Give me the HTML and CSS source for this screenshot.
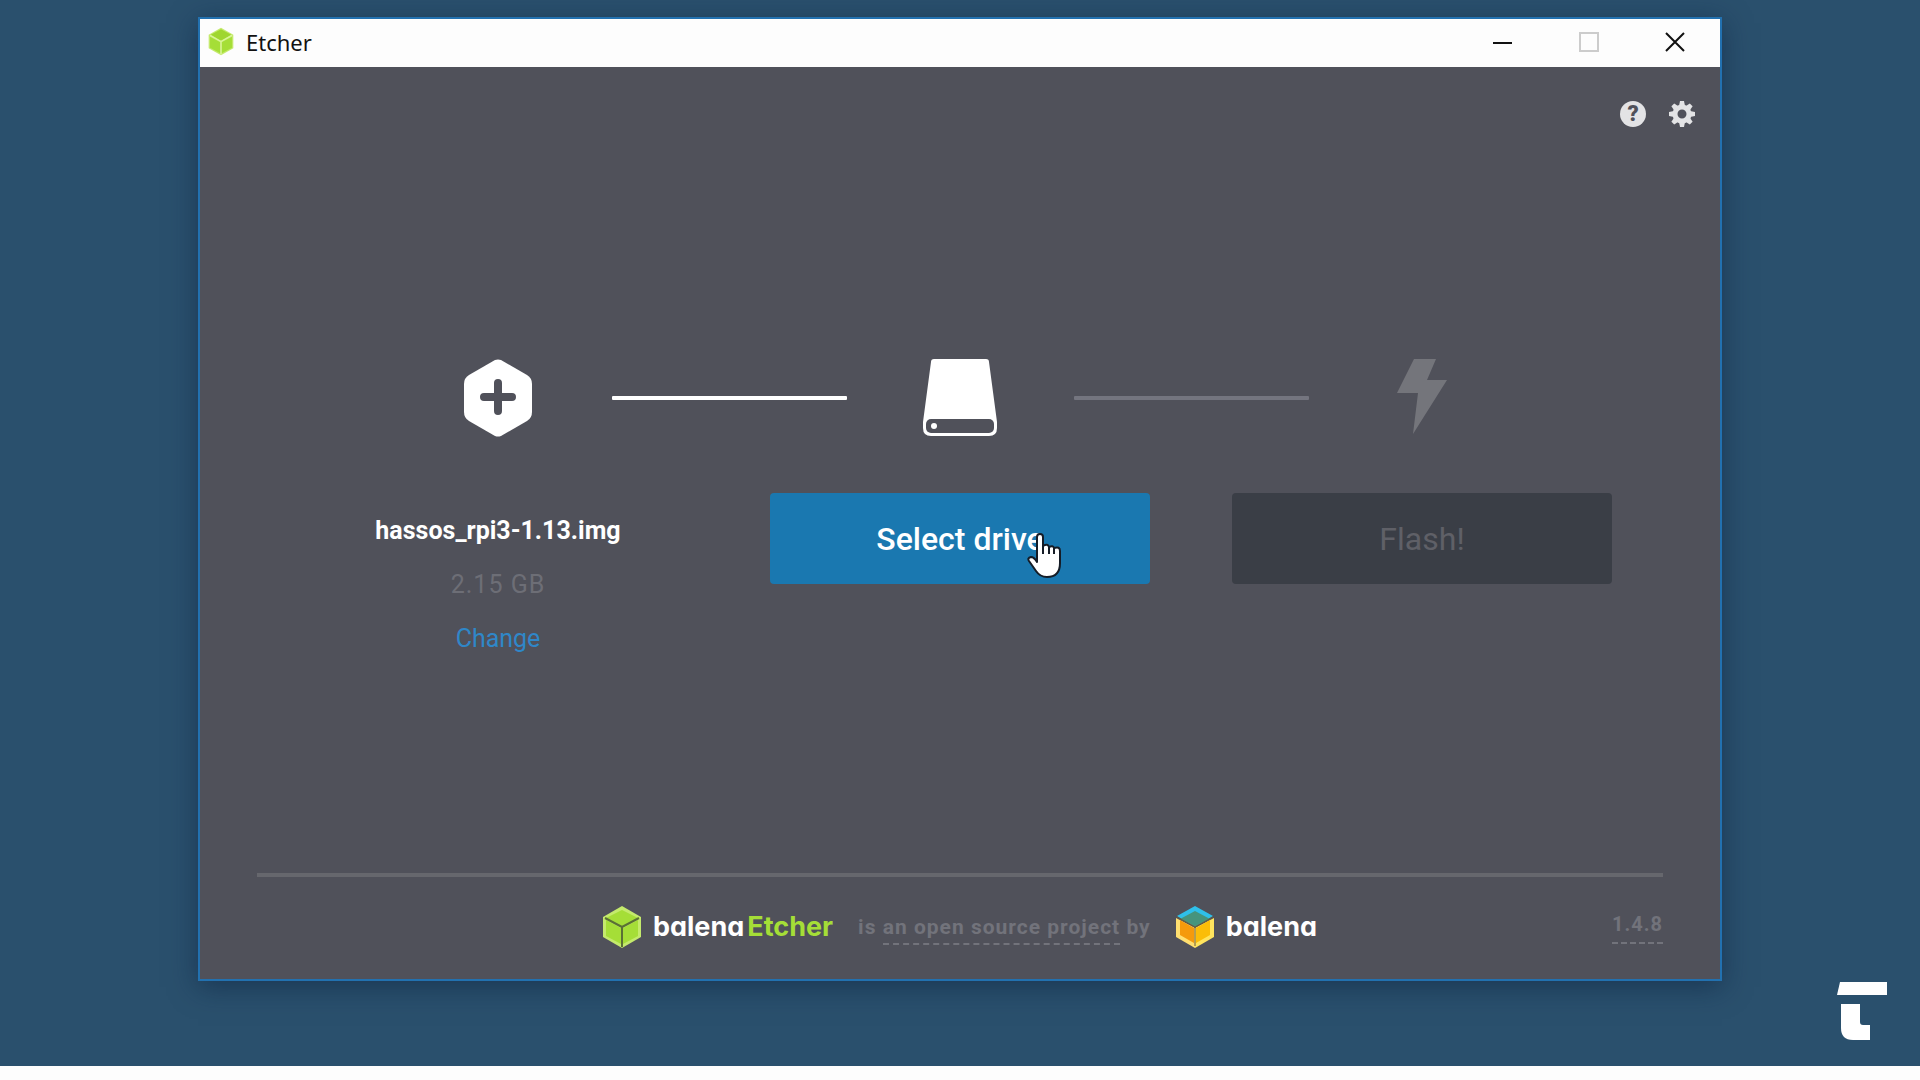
FILE: index.html
```
<!DOCTYPE html>
<html lang="en">
<head>
  <meta charset="UTF-8" />
  <meta name="viewport" content="width=device-width, initial-scale=1" />
  <title>Etcher</title>
  <link rel="stylesheet" href="styles.css">
</head>
<body>

<div class="desktop">
  <div class="window">

    <header class="titlebar">
      <svg class="app-icon" viewBox="0 0 38 42">
        <polygon points="19,1 37,11 37,31 19,41 1,31 1,11" fill="#c4ea6c" />
        <polygon points="19,3 34,11 19,20 4,11" fill="#9fd62f" />
        <polygon points="3,14 18,22 18,38 3,30" fill="#a5de37" />
        <polygon points="35,14 20,22 20,38 35,30" fill="#a5de37" />
        <path d="M3 12 L19 21 L35 12 M19 21 V40" fill="none" stroke="#d9f59a" stroke-width="2" />
      </svg>
      <span class="title">Etcher</span>
      <div class="window-controls">
        <button type="button" aria-label="Minimize">
          <svg width="20" height="20" viewBox="0 0 20 20"><path d="M0 11 H19" stroke="#111" stroke-width="2" /></svg>
        </button>
        <button type="button" aria-label="Maximize" disabled>
          <svg width="20" height="20" viewBox="0 0 20 20"><rect x="1" y="1" width="18" height="18" fill="none" stroke="#ccc" stroke-width="2" /></svg>
        </button>
        <button type="button" aria-label="Close">
          <svg width="20" height="20" viewBox="0 0 20 20"><path d="M1 1 L19 19 M19 1 L1 19" stroke="#111" stroke-width="2" /></svg>
        </button>
      </div>
    </header>

    <nav class="tools">
      <button type="button" class="help-btn" aria-label="Help">?</button>
      <button type="button" class="settings-btn" aria-label="Settings">
        <svg width="26" height="26" viewBox="-13 -13 26 26">
          <g fill="#e3e3e5">
            <path id="tooth" d="M-3 -8 L-2 -13 H2 L3 -8 Z" />
            <use href="#tooth" transform="rotate(45)" />
            <use href="#tooth" transform="rotate(90)" />
            <use href="#tooth" transform="rotate(135)" />
            <use href="#tooth" transform="rotate(180)" />
            <use href="#tooth" transform="rotate(225)" />
            <use href="#tooth" transform="rotate(270)" />
            <use href="#tooth" transform="rotate(315)" />
          </g>
          <circle r="7" fill="none" stroke="#e3e3e5" stroke-width="5" />
        </svg>
      </button>
    </nav>

    <main>
      <div class="progress">
        <svg class="step-icon" viewBox="0 0 76 78">
          <path d="M35 1 Q38 0 41 1 L67 16 Q72 19 72 25 V53 Q72 59 67 62 L41 77 Q38 78 35 77 L9 62 Q4 59 4 53 V25 Q4 19 9 16 Z" fill="#fff" />
          <path d="M38 24 V52 M24 38 H52" stroke="#50515a" stroke-width="8" stroke-linecap="round" />
        </svg>
        <span class="line"></span>
        <svg class="step-icon" viewBox="0 0 76 78">
          <path d="M12 0 H64 Q67 0 67 3 L75 63 V69 Q75 77 67 77 H9 Q1 77 1 69 V63 L9 3 Q9 0 12 0 Z" fill="#fff" />
          <rect x="4" y="60" width="68" height="14" rx="5" fill="#50515a" />
          <circle cx="12" cy="67" r="3" fill="#fff" />
        </svg>
        <span class="line line-off"></span>
        <svg class="step-icon" viewBox="0 0 76 78">
          <polygon points="30,0 52,0 43,21 63,21 29,75 34,34 13,34" fill="#74757b" />
        </svg>
      </div>

      <div class="steps">
        <div class="image-info">
          <strong class="image-name">hassos_rpi3-1.13.img</strong>
          <span class="image-size">2.15 GB</span>
          <a href="#" class="change">Change</a>
        </div>
        <div class="step">
          <button type="button" class="btn">Select drive</button>
          <!-- mouse pointer -->
          <svg class="cursor" viewBox="0 0 34 46">
            <path d="M10 26 V4 Q10 1 13 1 Q16 1 16 4 V13 Q21 10 22 14 Q26 12 27 15 Q33 13 33 18 V30 Q33 44 20 44 Q13 44 9 38 L2 28 Q0 25 4 24 Q7 24 10 29 Z" fill="#fff" stroke="#151c26" stroke-width="2" stroke-linejoin="round" />
            <path d="M16 12 V21 M22 14 V21 M27 15 V21" stroke="#151c26" stroke-width="2" />
          </svg>
        </div>
        <div class="step">
          <button type="button" class="btn" disabled>Flash!</button>
        </div>
      </div>
    </main>

    <footer>
      <div class="credits">
        <a href="#" class="brand">
          <svg class="cube" viewBox="0 0 38 42">
            <polygon points="19,0 38,11 38,31 19,42 0,31 0,11" fill="#c4ea6c" />
            <polygon points="19,4 35,12 19,21 3,12" fill="#a5de37" />
            <polygon points="3,14 18,22 18,38 3,30" fill="#a5de37" />
            <polygon points="35,14 20,22 20,38 35,30" fill="#a5de37" />
            <path d="M2 12 L19 21 L36 12 M19 21 V41" fill="none" stroke="#5a7035" stroke-width="2" />
          </svg>
          <span class="brand-name">balena<span class="green">Etcher</span></span>
        </a>
        <span class="note">is <a href="#" class="dashed">an open source project</a> by</span>
        <a href="#" class="brand">
          <svg class="cube" viewBox="0 0 38 42">
            <polygon points="19,0 37,10 19,21 1,10" fill="#2fc0ea" />
            <polygon points="19,5 34,13 19,21 4,13" fill="#46947d" />
            <polygon points="0,12 19,22 19,42 0,31" fill="#ffdf70" />
            <polygon points="38,12 19,22 19,42 38,31" fill="#ffe45e" />
            <polygon points="4,14 18,22 18,37 4,29" fill="#f59a0c" />
            <polygon points="34,14 20,22 20,37 34,29" fill="#fbbd08" />
            <path d="M1 11 L19 21 L37 11 M19 21 V40" fill="none" stroke="#6b5a3a" stroke-width="1" />
          </svg>
          <span class="brand-name">balena</span>
        </a>
      </div>
      <a href="#" class="dashed version">1.4.8</a>
    </footer>

  </div>

  <svg class="watermark" viewBox="0 0 50 58">
    <polygon points="3,0 50,0 50,13 0,13" fill="#fff" />
    <path d="M4 22 H23 V40 Q23 43 26 43 H33 V58 H16 Q4 58 4 46 Z" fill="#fff" />
  </svg>
</div>

</body>
</html>
```
FILE: styles.css
```
* {
  box-sizing: border-box;
}

body {
  margin: 0;
  min-height: 100vh;
  display: flex;
  flex-direction: column;
  padding-bottom: 14px;
  background-color: #fdfdfd;
  font-family: Roboto, "Liberation Sans", sans-serif;
}

button {
  padding: 0;
  border: none;
  background: none;
  font-family: inherit;
}

a {
  text-decoration: none;
}

svg {
  display: block;
}

.desktop {
  position: relative;
  flex: 1;
  display: flex;
  padding: 17px 198px 85px;
  background-color: #2a506d;
}

/* App window */
.window {
  flex: 1;
  display: flex;
  flex-direction: column;
  border: 2px solid #2271b0;
  background-color: #50515a;
  box-shadow: 0 6px 26px rgba(10, 30, 60, 0.5);
}

.titlebar {
  display: flex;
  align-items: center;
  height: 48px;
  padding: 0 2px 3px 8px;
  background-color: #fdfdfd;
}

.app-icon {
  width: 26px;
  height: 29px;
}

.title {
  margin-left: 12px;
  color: #111;
  font-family: "Noto Sans", "Open Sans", sans-serif;
  font-size: 22px;
  line-height: 30px;
}

.window-controls {
  display: flex;
  margin-left: auto;
}

.window-controls button {
  display: flex;
  align-items: center;
  justify-content: center;
  width: 86px;
  height: 45px;
}

.tools {
  display: flex;
  justify-content: flex-end;
  gap: 23px;
  padding: 34px 25px 0;
}

.help-btn {
  width: 26px;
  height: 26px;
  border-radius: 50%;
  background-color: #e3e3e5;
  color: #50515a;
  font-size: 22px;
  font-weight: 900;
  line-height: 26px;
}

/* Steps */
main {
  flex: 1;
  padding-top: 232px;
}

.progress {
  display: flex;
  align-items: center;
  justify-content: space-between;
  padding: 0 260px;
}

.step-icon {
  width: 76px;
  height: 78px;
}

.line {
  width: 235px;
  height: 4px;
  border-radius: 1px;
  background-color: #fff;
}

.line-off {
  background-color: #74757f;
}

.steps {
  display: grid;
  grid-template-columns: repeat(3, 1fr);
  gap: 82px;
  padding: 56px 108px 0;
}

.step {
  position: relative;
}

.btn {
  width: 100%;
  height: 91px;
  border-radius: 4px;
  background-color: #1a78b0;
  color: #fff;
  font-size: 32px;
  font-weight: 500;
}

.btn:disabled {
  background-color: #3a3e46;
  color: #5f6067;
  font-weight: 400;
}

.cursor {
  position: absolute;
  top: 40px;
  left: 257px;
  width: 34px;
  height: 46px;
}

.image-info {
  display: flex;
  flex-direction: column;
  align-items: center;
  gap: 22px;
  padding-top: 22px;
  font-size: 25px;
  line-height: 32px;
}

.image-name {
  color: #fff;
}

.image-size {
  color: #6d6e76;
  letter-spacing: 1px;
}

.change {
  color: #2f87c8;
}

/* Footer */
footer {
  position: relative;
  display: flex;
  align-items: center;
  justify-content: center;
  height: 106px;
  margin: 0 57px;
  padding-bottom: 3px;
  border-top: 4px solid #66676d;
}

.credits {
  display: flex;
  align-items: center;
  gap: 25px;
}

.brand {
  display: flex;
  align-items: center;
  gap: 12px;
}

.cube {
  width: 38px;
  height: 42px;
}

/* cv11 is the round, single-storey a */
.brand-name {
  color: #fff;
  font-family: Inter, Lato, sans-serif;
  font-feature-settings: "cv11";
  font-size: 27px;
  font-weight: 700;
  line-height: 36px;
}

.green {
  margin-left: 3px;
  color: #a5de37;
}

.note,
.version {
  color: #72737b;
  font-size: 20px;
  font-weight: 700;
  line-height: 28px;
  letter-spacing: 1px;
}

.note {
  font-size: 21px;
}

.dashed {
  padding-bottom: 4px;
  border-bottom: 2px dashed #72737b;
  color: inherit;
}

.version {
  position: absolute;
  right: 0;
  color: #72737b;
}

.watermark {
  position: absolute;
  right: 33px;
  bottom: 26px;
  width: 50px;
  height: 58px;
}
```
